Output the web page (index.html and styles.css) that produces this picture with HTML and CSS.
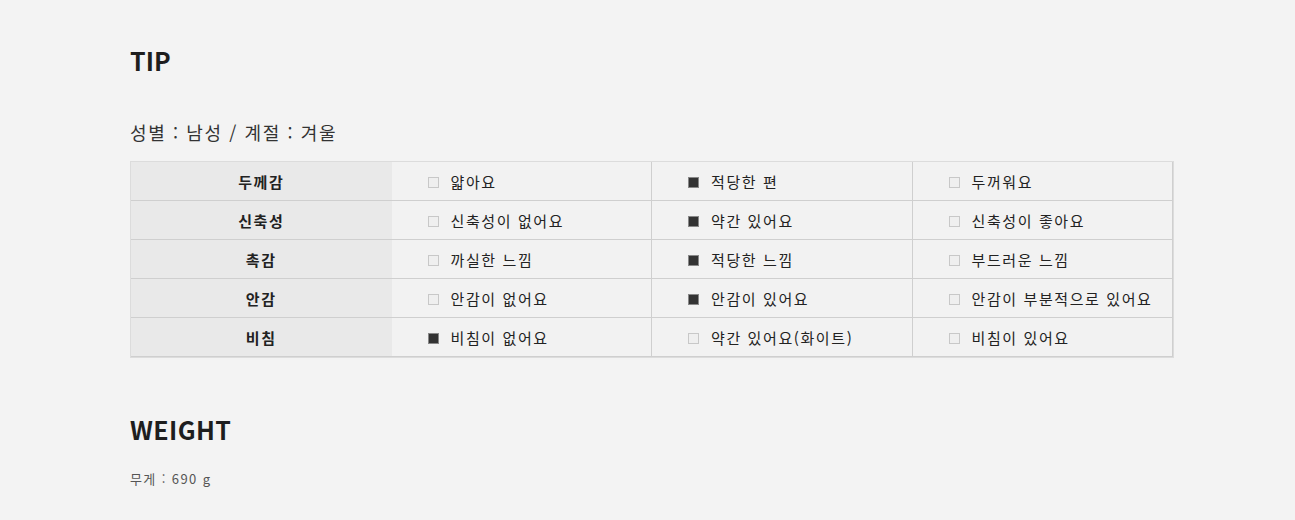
FILE: index.html
```html
<!DOCTYPE html>
<html lang="ko">
<head>
  <meta charset="UTF-8" />
  <title>TIP</title>
  <link rel="stylesheet" href="styles.css">
</head>
<body>
  <div class="wrap">
    <!-- TIP -->
    <h2 class="title">TIP</h2>
    <p class="info">성별 : 남성 / 계절 : 겨울</p>
    <table class="tip-table">
      <tr>
        <th>두께감</th>
        <td><span class="box"></span>얇아요</td>
        <td><span class="box on"></span>적당한 편</td>
        <td><span class="box"></span>두꺼워요</td>
      </tr>
      <tr>
        <th>신축성</th>
        <td><span class="box"></span>신축성이 없어요</td>
        <td><span class="box on"></span>약간 있어요</td>
        <td><span class="box"></span>신축성이 좋아요</td>
      </tr>
      <tr>
        <th>촉감</th>
        <td><span class="box"></span>까실한 느낌</td>
        <td><span class="box on"></span>적당한 느낌</td>
        <td><span class="box"></span>부드러운 느낌</td>
      </tr>
      <tr>
        <th>안감</th>
        <td><span class="box"></span>안감이 없어요</td>
        <td><span class="box on"></span>안감이 있어요</td>
        <td><span class="box"></span>안감이 부분적으로 있어요</td>
      </tr>
      <tr>
        <th>비침</th>
        <td><span class="box on"></span>비침이 없어요</td>
        <td><span class="box"></span>약간 있어요(화이트)</td>
        <td><span class="box"></span>비침이 있어요</td>
      </tr>
    </table>

    <!-- WEIGHT -->
    <h2 class="title weight">WEIGHT</h2>
    <p class="small">무게 : 690 g</p>
  </div>
</body>
</html>
```

FILE: styles.css
```css
body {
  margin: 0;
  background-color: #f3f3f3;
  color: #222;
  font-family: "Noto Sans CJK KR", "Noto Sans", sans-serif;
}

.wrap {
  width: 1044px;
  padding: 40px 0 0 130px;
}

.title {
  margin: 0;
  font-size: 25px;
  line-height: 40px;
  font-weight: bold;
  color: #1e1e1e;
}

.info {
  margin: 39px 0 0;
  font-size: 18px;
  line-height: 26px;
  letter-spacing: 1.6px;
  color: #333;
}

/* tip table */
.tip-table {
  width: 1044px;
  margin-top: 16px;
  border-collapse: separate;
  border-spacing: 0;
  border: 1px solid #dcdcdc;
  table-layout: fixed;
}

.tip-table th,
.tip-table td {
  height: 38px;
  padding: 0;
  border-bottom: 1px solid #cfcfcf;
  font-size: 15px;
  letter-spacing: 1.6px;
  color: #222;
}

.tip-table th {
  background-color: #e9e9e9;
  font-weight: bold;
  text-align: center;
}

.tip-table td {
  background-color: #f2f2f2;
  border-right: 1px solid #cfcfcf;
  padding-left: 36px;
}

.box {
  display: inline-block;
  width: 9px;
  height: 9px;
  border: 1px solid #c8c8c8;
  background-color: #efefef;
  margin-right: 12px;
  vertical-align: 0;
}

.box.on {
  background-color: #333;
  border-color: #888;
}

.title.weight {
  margin-top: 51px;
  letter-spacing: 0.4px;
}

.small {
  margin: 20px 0 0;
  font-size: 13px;
  letter-spacing: 1.4px;
  color: #555;
}
```
